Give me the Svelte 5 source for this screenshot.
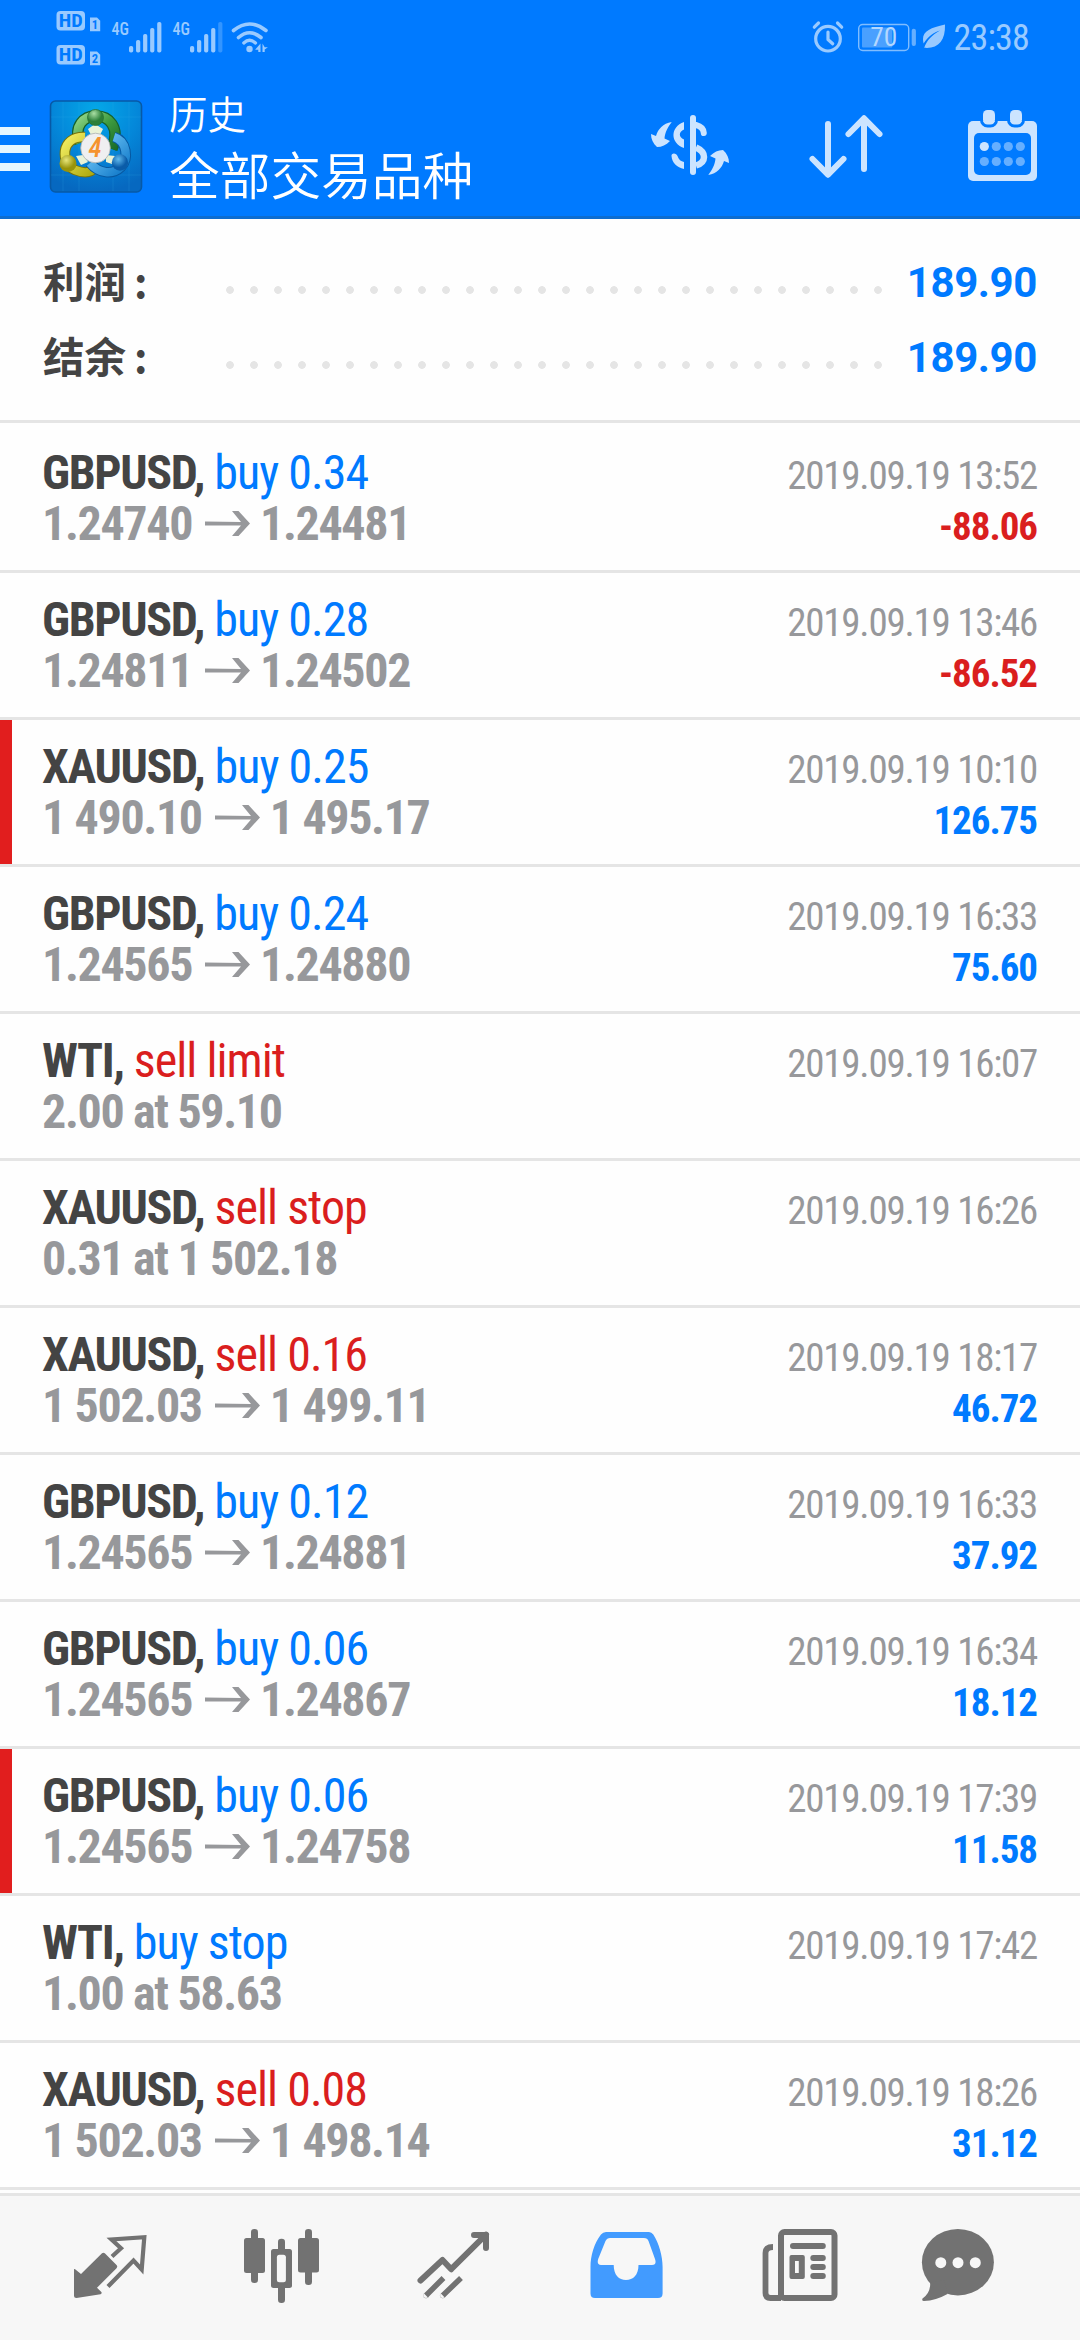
<script>
  const totals = [
    { label: '利润', value: '189.90' },
    { label: '结余', value: '189.90' }
  ];

  const deals = [
    { symbol: 'GBPUSD', side: 'buy', text: 'buy 0.34', from: '1.24740', to: '1.24481', time: '2019.09.19 13:52', profit: '-88.06' },
    { symbol: 'GBPUSD', side: 'buy', text: 'buy 0.28', from: '1.24811', to: '1.24502', time: '2019.09.19 13:46', profit: '-86.52' },
    { symbol: 'XAUUSD', side: 'buy', text: 'buy 0.25', from: '1 490.10', to: '1 495.17', time: '2019.09.19 10:10', profit: '126.75', marked: true },
    { symbol: 'GBPUSD', side: 'buy', text: 'buy 0.24', from: '1.24565', to: '1.24880', time: '2019.09.19 16:33', profit: '75.60' },
    { symbol: 'WTI', side: 'sell', text: 'sell limit', from: '2.00 at 59.10', time: '2019.09.19 16:07' },
    { symbol: 'XAUUSD', side: 'sell', text: 'sell stop', from: '0.31 at 1 502.18', time: '2019.09.19 16:26' },
    { symbol: 'XAUUSD', side: 'sell', text: 'sell 0.16', from: '1 502.03', to: '1 499.11', time: '2019.09.19 18:17', profit: '46.72' },
    { symbol: 'GBPUSD', side: 'buy', text: 'buy 0.12', from: '1.24565', to: '1.24881', time: '2019.09.19 16:33', profit: '37.92' },
    { symbol: 'GBPUSD', side: 'buy', text: 'buy 0.06', from: '1.24565', to: '1.24867', time: '2019.09.19 16:34', profit: '18.12' },
    { symbol: 'GBPUSD', side: 'buy', text: 'buy 0.06', from: '1.24565', to: '1.24758', time: '2019.09.19 17:39', profit: '11.58', marked: true },
    { symbol: 'WTI', side: 'buy', text: 'buy stop', from: '1.00 at 58.63', time: '2019.09.19 17:42' },
    { symbol: 'XAUUSD', side: 'sell', text: 'sell 0.08', from: '1 502.03', to: '1 498.14', time: '2019.09.19 18:26', profit: '31.12' }
  ];

  const bars = [46, 40, 34, 28, 22];
  const dotColumns = [364.3, 376.3, 388.3, 400.3];
</script>

<div class="screen">
  <header>
    <div class="status">
      <svg class="signals" width="220" height="72" viewBox="50 0 220 72">
        {#each [0, 34] as dy, i}
          <rect x="56.5" y={11 + dy} width="28.5" height="19.5" rx="4" fill="#99caff" />
          <text class="hd" x="70.7" y={27.2 + dy} textLength="24" lengthAdjust="spacingAndGlyphs">HD</text>
          <path d={`M90 ${17.5 + dy}h7l3.2 3.2v10.5h-10.2z`} fill="#99caff" />
          <text class="sim" x="95" y={28.8 + dy}>{i + 1}</text>
        {/each}
        {#each [0, 61] as dx}
          <text class="net" x={111.5 + dx} y="35" textLength="17.5" lengthAdjust="spacingAndGlyphs">4G</text>
          {#each bars as top, i}
            <rect x={129 + dx + i * 7.05} y={top} width="4.2" height={52.5 - top} rx="1.8" fill={dx && i === 4 ? '#3395ff' : '#99caff'} />
          {/each}
        {/each}
        <g fill="none" stroke="#99caff" stroke-width="3.6" stroke-linecap="round">
          <path d="M233.5 30.5Q249.5 17.5 266 30.5" />
          <path d="M238.5 37.5Q249.5 28 261 37.5" />
          <path d="M243.8 43Q249.5 37.5 255.5 43" stroke-width="3.2" />
        </g>
        <circle cx="249.5" cy="49" r="3.2" fill="#99caff" />
        <path d="M260.5 43.5v8.5h-2.2v-2.2h-3.2zM262.5 43.5v8.5h2.2v-2.5l3.2-2.2h-3.2z" fill="#99caff" />
      </svg>
      <div class="status-right">
        <svg width="136" height="72" viewBox="190 0 136 72">
          <g fill="none" stroke="#99caff" stroke-linecap="round">
            <circle cx="208" cy="38.7" r="12.3" stroke-width="3.2" />
            <path d="M208 32v7.5l4.7 4.2" stroke-width="3.2" stroke-linejoin="round" />
            <path d="M194.3 27.2l4.2-4.2M221.7 27.2l-4.2-4.2" stroke-width="3.2" />
          </g>
          <rect x="238.7" y="24.5" width="50" height="26" rx="4" fill="none" stroke="#80bdff" stroke-width="1.4" />
          <rect x="242" y="27.5" width="30.3" height="20" rx="1" fill="#4aa0ff" />
          <rect x="291.7" y="28.8" width="4.2" height="17.2" rx="2" fill="#66afff" />
          <text class="level" x="263.7" y="45.8" textLength="27" lengthAdjust="spacingAndGlyphs">70</text>
          <path d="M325 24.5C311 27.5 303 31 303 39q0 2.5.6 4.6C308 36 314 32.5 320 30.5 312 35 307 40 304.2 47.8 318 49 325.5 41 325 24.5Z" fill="#99caff" />
        </svg>
        <span class="clock">23:38</span>
      </div>
    </div>

    <div class="toolbar">
      <div class="burger"><i></i><i></i><i></i></div>
      <svg class="logo" width="94" height="94" viewBox="0 0 94 94">
        <defs>
          <radialGradient id="tile" cx=".5" cy=".1" r=".9">
            <stop offset="0" stop-color="#04a8e8" /><stop offset=".5" stop-color="#0488da" /><stop offset="1" stop-color="#0668c0" />
          </radialGradient>
          <linearGradient id="green" x1="0" y1="0" x2="1" y2="1">
            <stop offset="0" stop-color="#91d689" /><stop offset=".5" stop-color="#3f9b3f" /><stop offset="1" stop-color="#1a6d28" />
          </linearGradient>
          <linearGradient id="yellow" x1="0" y1="0" x2="1" y2="1">
            <stop offset="0" stop-color="#f3ee62" /><stop offset="1" stop-color="#aca80d" />
          </linearGradient>
          <linearGradient id="azure" x1="0" y1="0" x2="1" y2="1">
            <stop offset="0" stop-color="#7fd2ff" /><stop offset="1" stop-color="#0f78c8" />
          </linearGradient>
          <radialGradient id="gball" cx=".4" cy=".25"><stop offset="0" stop-color="#a9dfa4" /><stop offset="1" stop-color="#2b7f38" /></radialGradient>
          <radialGradient id="yball" cx=".4" cy=".3"><stop offset="0" stop-color="#e7e67a" /><stop offset="1" stop-color="#98930b" /></radialGradient>
          <radialGradient id="bball" cx=".4" cy=".3"><stop offset="0" stop-color="#5fb9ee" /><stop offset="1" stop-color="#0a5ca8" /></radialGradient>
        </defs>
        <rect x="1.5" y="2" width="91" height="91" rx="5" fill="url(#tile)" stroke="#0759a6" stroke-width="1.6" />
        <path d="M14 3v89M30 3v89M64 3v89M80 3v89M2 18h90M2 76h90" stroke="#39b4ee" stroke-width=".6" opacity=".3" />
        <path d="M31 44C24 27 35 17 47 17s25 10 16 33" fill="none" stroke="#17612b" stroke-width="11.5" />
        <path d="M31 44C24 27 35 17 47 17s25 10 16 33" fill="none" stroke="url(#green)" stroke-width="9" />
        <path d="M36 38C10 37 12 66 26 71c10 4 16 3 21-3" fill="none" stroke="#77720a" stroke-width="10.500" />
        <path d="M36 38C10 37 12 66 26 71c10 4 16 3 21-3" fill="none" stroke="url(#yellow)" stroke-width="8.500" />
        <path d="M65 38c13 4 15 22 7 30-8 8-22 7-31-4" fill="none" stroke="#0758a0" stroke-width="10.500" />
        <path d="M65 38c13 4 15 22 7 30-8 8-22 7-31-4" fill="none" stroke="url(#azure)" stroke-width="8.500" />
        <path d="M39 30l7-5 8 5-3 6H42zM27 57l7-1 5 7-7 3zM57 56l9 1-3 8-6-2z" fill="#e9f2d7" />
        <circle cx="46.500" cy="18.500" r="8" fill="url(#gball)" stroke="#256f35" stroke-width=".8" />
        <circle cx="19" cy="64.500" r="8.500" fill="url(#yball)" />
        <circle cx="71" cy="63.500" r="8.200" fill="url(#bball)" />
        <circle cx="46.500" cy="49" r="14.800" fill="#efeff1" stroke="#a9b0ae" stroke-width=".8" />
        <text class="four" x="46" y="57.800">4</text>
      </svg>
      <div class="titles">
        <div class="small">历史</div>
        <div class="large">全部交易品种</div>
      </div>
      <div class="actions">
        <svg width="86" height="84" viewBox="28 104 86 84">
          <g fill="none" stroke="#cce4ff" stroke-width="6" stroke-linecap="round">
            <path d="M73 118v54" />
            <path d="M76 125Q83.500 127 83.800 133" />
          </g>
          <path d="M76 147.500Q84 151 84 157T76 165.500" fill="none" stroke="#cce4ff" stroke-width="6.500" />
          <path d="M64 122C50 127 50 143 64 148V139.500C58.500 137 58.500 132 64 129.500Z" fill="#cce4ff" />
          <path d="M51.500 156C51 152.500 56.500 152.500 57.500 156 58.500 159.500 61 161.500 64 162V169C57 167.500 52 163 51.500 156Z" fill="#cce4ff" />
          <path id="turn" d="M51.700 122C43 123.500 38 129 36 136L31 134C31 139 33 143.500 37 147 42 147 46 145 50 141L44.500 138.500C45 132 48 127 51.700 122Z" fill="#cce4ff" />
          <use href="#turn" transform="rotate(180 70 148.5)" />
        </svg>
        <svg width="78" height="84" viewBox="186 104 78 84" fill="none" stroke="#cce4ff" stroke-width="6" stroke-linecap="round" stroke-linejoin="round">
          <path d="M208 124v50.500M192.500 159l15.500 15.700L223.500 159M244 169v-50.500M228.500 134L244 118.300 259.500 134" />
        </svg>
        <svg width="70" height="84" viewBox="348 104 70 84">
          <rect x="348" y="121" width="69" height="60" rx="5" fill="#cce4ff" />
          <rect x="354" y="133" width="57" height="42" rx="5" fill="#007aff" />
          <rect x="361.500" y="108.500" width="15" height="17.500" rx="6" fill="none" stroke="#007aff" stroke-width="3" />
          <rect x="388.500" y="108.500" width="15" height="17.500" rx="6" fill="none" stroke="#007aff" stroke-width="3" />
          <rect x="363" y="110" width="12" height="14" rx="4.500" fill="#cce4ff" />
          <rect x="390" y="110" width="12" height="14" rx="4.500" fill="#cce4ff" />
          {#each dotColumns as cx, i}
            <circle {cx} cy="146.500" r="4.600" fill={i ? '#66afff' : '#cce4ff'} />
            <circle {cx} cy="161.500" r="4.600" fill="#66afff" />
          {/each}
        </svg>
      </div>
    </div>
  </header>

  <section class="summary">
    {#each totals as t}
      <div class="total">
        <span class="label">{t.label}</span><span class="colon">:</span>
        <span class="leader"></span>
        <span class="sum">{t.value}</span>
      </div>
    {/each}
  </section>

  <main>
    {#each deals as d}
      <div class="deal" class:marked={d.marked}>
        <div class="line">
          <span class="what"><b>{d.symbol},</b> <span class={d.side}>{d.text}</span></span>
          <span class="time">{d.time}</span>
        </div>
        <div class="line">
          <span class="price">{d.from}{#if d.to}<svg class="arrow" width="45" height="25" viewBox="0 0 45 25"><path d="M0 10.500L36 11 27 0H33.500L45 12.500 33.500 25H27L36 14.500H0Z" /></svg>{d.to}{/if}</span>
          {#if d.profit}
            <span class="profit" class:loss={d.profit.startsWith('-')}>{d.profit}</span>
          {/if}
        </div>
      </div>
    {/each}
  </main>

  <nav>
    <svg viewBox="0 0 172 144">
      <path d="M50.800 73L57 78 78 57.300Q79.300 56 80.800 57.300L92.500 69Q94 70.500 92.500 72.200L73 91.700 77.600 96.200Q77.800 98 76.500 98.300L52.500 102Q50 102 50 99.500V74Q50 72.500 50.800 73Z" fill="#727272" />
      <path d="M88 60.500L97 52.300 87.500 43.500 120.300 41.200 117.700 73.500 109.500 64.500 84 90.500" fill="none" stroke="#727272" stroke-width="4.200" stroke-linejoin="miter" />
    </svg>
    <svg viewBox="0 0 172 144" fill="#727272">
      <rect x="48" y="42" width="21" height="35" rx="2.500" />
      <rect x="55" y="33" width="7" height="54" rx="3.300" />
      <rect x="102" y="42" width="21" height="34.500" rx="2.500" />
      <rect x="109" y="33" width="7" height="56" rx="3.300" />
      <rect x="82" y="42.700" width="7" height="64.300" rx="3.300" />
      <rect x="75" y="53" width="21" height="39" rx="2.500" />
      <rect x="80.900" y="58.700" width="9" height="27.500" rx="2.500" fill="#f7f7f7" />
    </svg>
    <svg viewBox="0 0 172 144" fill="none" stroke="#727272" stroke-width="6">
      <path d="M52.500 84.500L74.500 64 83.200 73.200 118 38.700" stroke-linejoin="round" stroke-linecap="round" />
      <path d="M106 39H118V52" stroke-linecap="round" stroke-linejoin="round" />
      <path d="M58 99.500L75.500 82M74.800 99.500L93 82" stroke-width="5.500" />
      <circle cx="58" cy="99.300" r=".1" stroke-width="5.600" /><circle cx="74.800" cy="99.300" r=".1" stroke-width="5.600" />
    </svg>
    <svg viewBox="0 0 172 144">
      <path d="M66 36H109Q111.500 36 113.300 38.500C119 47.500 122.600 60 122.600 71V97.500Q122.600 102 118 102H55Q50.500 102 50.500 97.500V71C50.500 60 54 47.500 61 38.500Q63 36 66 36ZM70 42Q67 42 65.500 45L58.200 63Q56.500 69 61 69H73.700C73.700 79 79 84 86 84S98.500 79 98.500 69H112Q117 69 115 63L108.500 45Q107.500 42 104 42Z" fill="#429bff" fill-rule="evenodd" />
    </svg>
    <svg viewBox="0 0 172 144" fill="#727272">
      <rect x="69" y="36" width="53.500" height="66" rx="3.500" fill="none" stroke="#727272" stroke-width="6" />
      <path d="M61 51Q53.500 51 53.500 57V97Q53.500 102 58.500 102H69" fill="none" stroke="#727272" stroke-width="5.800" />
      <rect x="78" y="47" width="35.800" height="6" rx="3" />
      <path d="M79.500 59H90.800Q92.800 59 92.800 61V81Q92.800 83 90.800 83H79.500Q77.500 83 77.500 81V61Q77.500 59 79.500 59ZM83 65V77H86.800V65Z" fill-rule="evenodd" />
      <rect x="98.300" y="59" width="15.500" height="6" rx="3" />
      <rect x="98.300" y="68" width="15.500" height="6" rx="3" />
      <rect x="98.300" y="77" width="15.500" height="6" rx="3" />
    </svg>
    <svg viewBox="0 0 172 144" fill="#727272">
      <ellipse cx="73.900" cy="66.200" rx="36" ry="33.200" />
      <path d="M46.200 87Q46.500 97 38.500 102.500 37.500 105 40 105 52 104.500 63.500 98L60 84Z" />
      <circle cx="56.800" cy="66.700" r="5.500" fill="#f7f7f7" />
      <circle cx="74" cy="66.700" r="5.500" fill="#f7f7f7" />
      <circle cx="91.300" cy="66.700" r="5.500" fill="#f7f7f7" />
    </svg>
  </nav>
</div>

<style>
  :global(body) {
    margin: 0;
    background: #fefefe;
  }
  .screen {
    width: 1080px;
    height: 2340px;
    display: flex;
    flex-direction: column;
    overflow: hidden;
    background: #fefefe;
    font-family: 'Roboto Condensed', Roboto, 'Noto Sans CJK SC', sans-serif;
    font-stretch: 75%;
  }
  svg {
    display: block;
    flex: none;
  }
  header {
    box-sizing: border-box;
    height: 219px;
    flex: none;
    background: #007aff;
    border-bottom: 3px solid #0d6dd0;
  }
  .status {
    height: 72px;
    display: flex;
    justify-content: space-between;
    padding: 0 51px 0 50px;
  }
  .status-right {
    display: flex;
    align-items: center;
    gap: 8px;
  }
  .clock {
    color: #99caff;
    font-size: 36px;
    line-height: 72px;
    padding-top: 4px;
    letter-spacing: -0.8px;
  }
  .hd, .sim {
    fill: #007aff;
    font-weight: 700;
    text-anchor: middle;
  }
  .hd { font-size: 19px; }
  .sim { font-size: 12.5px; }
  .net {
    fill: #99caff;
    font-size: 18.5px;
    font-weight: 500;
  }
  .level {
    fill: #b3d7ff;
    font-size: 26px;
    text-anchor: middle;
    font-stretch: 100%;
  }
  .toolbar {
    height: 144px;
    display: flex;
    align-items: flex-start;
    padding-right: 42px;
  }
  .burger {
    width: 30px;
    padding-top: 55px;
    display: flex;
    flex-direction: column;
    gap: 10px;
  }
  .burger i {
    height: 8px;
    background: #e6f6ff;
  }
  .logo {
    margin: 27px 0 0 19px;
  }
  .four {
    fill: #f5932f;
    font-size: 27px;
    font-weight: 500;
    font-style: italic;
    text-anchor: middle;
  }
  .titles {
    margin-left: 26px;
    color: #fff;
    font-family: 'Noto Sans CJK SC', sans-serif;
    font-weight: 350;
    white-space: nowrap;
  }
  .small {
    font-size: 38.5px;
    line-height: 44px;
    padding-top: 18px;
  }
  .large {
    font-size: 50.7px;
    line-height: 60px;
    margin-top: 9px;
  }
  .actions {
    margin-left: auto;
    margin-top: 32px;
    display: flex;
    gap: 0 84px;
  }
  .actions svg:first-child {
    margin-right: -12px;
  }
  .summary {
    box-sizing: border-box;
    height: 204px;
    flex: none;
    padding: 26px 43px 0;
    border-bottom: 3px solid #e5e5e5;
  }
  .total {
    height: 75px;
    display: flex;
    align-items: center;
  }
  .label, .colon {
    color: #444;
    font-family: 'Noto Sans CJK SC', sans-serif;
    font-size: 41.5px;
    font-weight: 700;
    line-height: 75px;
    margin-top: -4px;
  }
  .colon {
    margin-left: 8px;
  }
  .leader {
    width: 672px;
    height: 24px;
    margin: 14px 0 0 auto;
    background: radial-gradient(circle, #e5e5e5 3.5px, transparent 4.2px) 0 0 / 24px 24px;
  }
  .sum {
    width: 147px;
    text-align: right;
    color: #007aff;
    font-size: 42px;
    font-weight: 700;
    font-stretch: 100%;
    font-family: Roboto, sans-serif;
    letter-spacing: -0.4px;
  }
  main {
    padding-top: 3px;
    height: 1767px;
    box-sizing: border-box;
    flex: none;
  }
  .deal {
    box-sizing: border-box;
    height: 147px;
    padding: 21px 43px 0 42px;
    border-bottom: 3px solid #e5e5e5;
  }
  .marked {
    background: linear-gradient(90deg, #e11e1e 12px, transparent 12px);
  }
  .line {
    display: flex;
    justify-content: space-between;
    align-items: baseline;
    height: 51px;
    line-height: 51px;
    white-space: nowrap;
  }
  .what, .price {
    font-size: 48px;
    letter-spacing: -0.95px;
  }
  .what b {
    color: #444;
    letter-spacing: -1.35px;
  }
  .buy { color: #007aff; }
  .sell { color: #da1e1e; }
  .price {
    color: #97989b;
    font-weight: 700;
    letter-spacing: -1.35px;
  }
  .arrow {
    display: inline-block;
    margin: 0 10px 0 13px;
    vertical-align: 4px;
    fill: #97989b;
  }
  .time {
    color: #97989b;
    font-size: 39px;
    letter-spacing: -1.25px;
  }
  .profit {
    color: #007aff;
    font-size: 39px;
    font-weight: 700;
    letter-spacing: -1.05px;
  }
  .profit.loss {
    color: #da1e1e;
  }
  nav {
    box-sizing: border-box;
    margin-top: 3px;
    height: 148px;
    flex: none;
    display: flex;
    padding-left: 24px;
    background: #f7f7f7;
    border-top: 3px solid #e5e5e5;
  }
  nav svg {
    width: 172px;
    height: 144px;
  }
</style>
